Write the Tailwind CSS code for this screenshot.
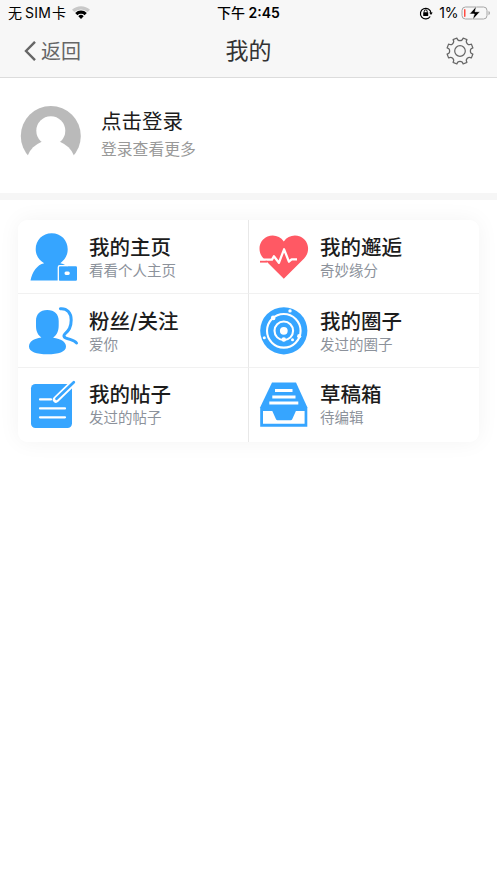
<!DOCTYPE html>
<html lang="zh-CN">
<head>
<meta charset="utf-8">
<title>我的</title>
<script src="https://cdn.jsdelivr.net/npm/@tailwindcss/browser@4"></script>
</head>
<body class="flex h-[883px] w-[497px] flex-col overflow-hidden bg-white font-['Inter','Noto_Sans_CJK_SC',sans-serif] text-[#1c1c1c]">
  <header class="flex h-[78px] shrink-0 flex-col border-b border-[#dcdcdc] bg-[#f7f7f7]">
    <div class="grid h-[25px] grid-cols-3 items-center pl-2 pr-[6px] text-[14px] leading-[25px] text-black">
      <div class="flex items-center whitespace-nowrap">
        <span>无</span><span class="ml-[3px] tracking-[0.2px]">SIM</span><span class="ml-[1px]">卡</span>
        <svg class="ml-[6px] h-[14px] w-[18px]" viewBox="0 0 18 14">
          <path d="M0 3.800A13 13 0 0 1 18 3.800L15.700 6.100A9.800 9.800 0 0 0 2.300 6.100Z" fill="#c8c8c8"/>
          <path d="M3.200 7A8.200 8.200 0 0 1 14.800 7L12.600 9.300A5.100 5.100 0 0 0 5.400 9.300Z"/>
          <path d="M6.300 10.200A3.800 3.800 0 0 1 11.700 10.200L9 12.900Z"/>
        </svg>
      </div>
      <div class="pr-[2px] text-center font-semibold whitespace-nowrap"><span class="font-medium">下午</span> 2:45</div>
      <div class="flex items-center justify-end">
        <svg class="mr-[6px] h-[14px] w-[14px]" viewBox="0 0 14 14" fill="none" stroke="#000" stroke-width="1.200">
          <path d="M11.200 10.500A5.300 5.300 0 1 1 12 7"/>
          <path d="M10.200 6.500H13.700L12 9Z" fill="#000" stroke="none"/>
          <rect x="4.200" y="6.300" width="5" height="3.700" rx=".5" fill="#000" stroke="none"/>
          <path d="M5.200 6.500V5.400a1.500 1.500 0 0 1 3 0V6.500" stroke-width="1"/>
        </svg>
        <span class="tracking-[-0.4px]">1%</span>
        <svg class="ml-[3px] h-[14px] w-[30px]" viewBox="0 0 30 14">
          <rect x="1" y="1" width="25" height="12" rx="3.500" fill="none" stroke="#a6a6a6"/>
          <path d="M27.500 5v4.200q1.500-.6 1.500-2.100T27.500 5" fill="#a6a6a6"/>
          <rect x="3" y="3" width="1.500" height="8" rx=".7" fill="#ff4b42"/>
          <path d="M15.500 0 8.500 8h4.800L11.500 14l7.500-8.300h-5Z" fill="#000" stroke="#f7f7f7" stroke-width=".6"/>
        </svg>
      </div>
    </div>
    <div class="grid h-[52px] grid-cols-3 items-center pl-6 pr-[23px]">
      <div class="flex items-center text-[20px] leading-[30px] text-[#666]">
        <svg class="mr-[5px] h-[20px] w-[12px]" viewBox="0 0 12 20" fill="none" stroke="#666" stroke-width="2.400"><path d="M11 .8 2 10l9 9.200"/></svg><span class="pt-[2px]">返回</span>
      </div>
      <h1 class="pr-[1px] text-center text-[23px] leading-[50px] text-[#333]">我的</h1>
      <svg class="h-7 w-7 justify-self-end" viewBox="-14 -14 28 28" fill="none" stroke="#666" stroke-width="1.200" stroke-linejoin="round">
        <path d="M3.100-12.930 6.950-11.340A3.150 3.150 0 0 0 11.340-6.950L12.930-3.100A3.150 3.150 0 0 0 12.930 3.100L11.340 6.950A3.150 3.150 0 0 0 6.950 11.340L3.100 12.930A3.150 3.150 0 0 0-3.100 12.930L-6.950 11.340A3.150 3.150 0 0 0-11.340 6.950L-12.930 3.100A3.150 3.150 0 0 0-12.930-3.100L-11.340-6.950A3.150 3.150 0 0 0-6.950-11.340L-3.100-12.930A3.150 3.150 0 0 0 3.100-12.930Z"/>
        <circle r="5.300"/>
      </svg>
    </div>
  </header>

  <section class="flex h-[115px] shrink-0 items-start pt-[27px] pl-[20px]">
    <svg class="h-[62px] w-[62px]" viewBox="20 105 62 62">
      <circle cx="50.800" cy="136" r="30" fill="#bababa"/>
      <circle cx="50.800" cy="130.800" r="14.500" fill="#fff"/>
      <circle cx="50.800" cy="165" r="25" fill="#fff"/>
    </svg>
    <div class="ml-[19px] flex flex-col pt-[2px]">
      <div class="text-[20.5px] leading-[30px]">点击登录</div>
      <div class="text-[15.8px] leading-[26px] text-[#999]">登录查看更多</div>
    </div>
  </section>
  <div class="h-[7px] shrink-0 bg-[#f6f6f6]"></div>

  <main class="mx-[18px] mt-[20px] grid grid-cols-[231px_230px] grid-rows-[74px_74px_74px] rounded-[9px] bg-white shadow-[0_0_22px_rgba(0,0,0,0.05)]">
    <div class="flex border-r border-b border-r-[#e8e8e8] border-b-[#f1f1f1]">
      <svg class="h-[73px] w-[71px]" viewBox="18 220 71 73" fill="#36a5ff">
        <path d="M51.700 233.300c9.200 0 16 7 16 15.900 0 6.600-3.300 10.900-7.400 14 3 .6 5 1.700 6.900 3.200h-8.500v14H30.500c1.600-8.200 6.500-15.800 13.700-17.200-4.600-2.700-8.500-7.400-8.500-14 0-8.900 6.800-15.900 16-15.900Z"/>
        <path fill-rule="evenodd" d="M60 266.300h15.800a1.200 1.200 0 0 1 1.200 1.200v12a1.200 1.200 0 0 1-1.200 1.200H60a1.200 1.200 0 0 1-1.200-1.200v-12a1.200 1.200 0 0 1 1.200-1.200Zm6 5.200q-1.500 0-1.500 1.700t1.500 1.700h2.300q1.500 0 1.500-1.700t-1.500-1.700Z"/>
        <path d="M58.300 281.500v-14.300q0-1.500 1.500-1.500h8" fill="none" stroke="#fff" stroke-width="1.300"/>
      </svg>
      <div class="pt-[13px]"><div class="text-[20.5px] leading-[29px] font-medium">我的主页</div><div class="text-[14.5px] leading-[18px] text-[#8c929b]">看看个人主页</div></div>
    </div>
    <div class="flex border-b border-[#f1f1f1]">
      <svg class="h-[73px] w-[71px]" viewBox="249 220 71 73">
        <path d="M283.800 278.800 263.500 258.500C257 252 258.500 240.500 267.500 236.600c6-2.500 12.500-.5 16.300 4.800 3.800-5.300 10.300-7.300 16.300-4.800 9 3.900 10.500 15.400 4 21.900Z" fill="#ff5964"/>
        <path d="M259 259.600h13l1.900-3.300 5 6.500 5.200-13.500 4.800 12.400 2.700-2.300h5.400" fill="none" stroke="#fff" stroke-width="2.300" stroke-linejoin="round"/>
        <path d="M260 261.700h7" stroke="#ff5964" stroke-width="1.800"/>
      </svg>
      <div class="pt-[13px]"><div class="text-[20.5px] leading-[29px] font-medium">我的邂逅</div><div class="text-[14.5px] leading-[18px] text-[#8c929b]">奇妙缘分</div></div>
    </div>
    <div class="flex border-r border-b border-r-[#e8e8e8] border-b-[#f1f1f1]">
      <svg class="h-[73px] w-[71px]" viewBox="18 294 71 73" fill="#36a5ff">
        <path d="M47.200 310c7.500 0 11.500 4.200 11.500 11v4.500c0 6.300-2.400 10-5.600 12.200 8.100 1 12.900 4.300 12.900 8.700 0 5.400-7.600 7.800-18.500 7.800S29 351.800 29 346.400c0-4.400 4.700-7.900 12.400-8.800-3.200-2.500-5.400-5.700-5.400-11.600v-5c0-6.800 4-11 11.200-11Z"/>
        <path d="M60.400 308.700c6.800-.6 10.800 4.300 10.800 11.300 0 8.500-3.400 11-6.500 14.200-1.400 1.400-.8 2.800.8 3.600 4.800 2.100 9 2.200 11 5.200" fill="none" stroke="#36a5ff" stroke-width="3" stroke-linecap="round"/>
      </svg>
      <div class="pt-[13px]"><div class="text-[20.5px] leading-[29px] font-medium">粉丝/关注</div><div class="text-[14.5px] leading-[18px] text-[#8c929b]">爱你</div></div>
    </div>
    <div class="flex border-b border-[#f1f1f1]">
      <svg class="h-[73px] w-[71px]" viewBox="249 294 71 73">
        <circle cx="283.800" cy="330.800" r="23.600" fill="#36a5ff"/>
        <g fill="none" stroke="#fff" stroke-width="2.100">
          <circle cx="283.800" cy="330.800" r="16.800"/>
          <circle cx="283.800" cy="330.800" r="9.300"/>
        </g>
        <circle cx="283.800" cy="330.800" r="3.900" fill="#fff"/>
        <g fill="#fff"><circle cx="273.200" cy="317.900" r="2.300"/><circle cx="290" cy="310.900" r="1.700"/><circle cx="264.300" cy="337.800" r="1.500"/><circle cx="292.500" cy="339.800" r="1.500"/><circle cx="283.800" cy="339.500" r="2.200"/><circle cx="299.200" cy="336.200" r="2.100"/></g>
      </svg>
      <div class="pt-[13px]"><div class="text-[20.5px] leading-[29px] font-medium">我的圈子</div><div class="text-[14.5px] leading-[18px] text-[#8c929b]">发过的圈子</div></div>
    </div>
    <div class="flex border-r border-[#e8e8e8]">
      <svg class="h-[74px] w-[71px]" viewBox="18 368 71 74" fill="none" stroke-linecap="round">
        <rect x="31" y="384" width="41" height="44" rx="4.500" fill="#36a5ff"/>
        <path d="M40 399.400h11M40 408.400h25M40 417.300h25" stroke="#fff" stroke-width="2.200"/>
        <path d="M56 399.500 73 383" stroke="#fff" stroke-width="6.500"/>
        <path d="M56.500 398.800 73.800 382.300" stroke="#36a5ff" stroke-width="2.700"/>
      </svg>
      <div class="pt-[12px]"><div class="text-[20.5px] leading-[29px] font-medium">我的帖子</div><div class="text-[14.5px] leading-[18px] text-[#8c929b]">发过的帖子</div></div>
    </div>
    <div class="flex">
      <svg class="h-[74px] w-[71px]" viewBox="249 368 71 74">
        <path d="M272 382.500h24l11.300 24.800v19.400H260.200v-19.400Z" fill="#36a5ff"/>
        <path d="M275 389h17.500v3H275Zm-2.700 6.400h23.200v3h-23.200Zm-3 6.100h29v3h-29ZM263 411h9.300l3.700 8.200q.5 1 1.500 1h13.200q1 0 1.500-1l3.700-8.200h8.700v12.800H263Z" fill="#fff"/>
      </svg>
      <div class="pt-[12px]"><div class="text-[20.5px] leading-[29px] font-medium">草稿箱</div><div class="text-[14.5px] leading-[18px] text-[#8c929b]">待编辑</div></div>
    </div>
  </main>
</body>
</html>
